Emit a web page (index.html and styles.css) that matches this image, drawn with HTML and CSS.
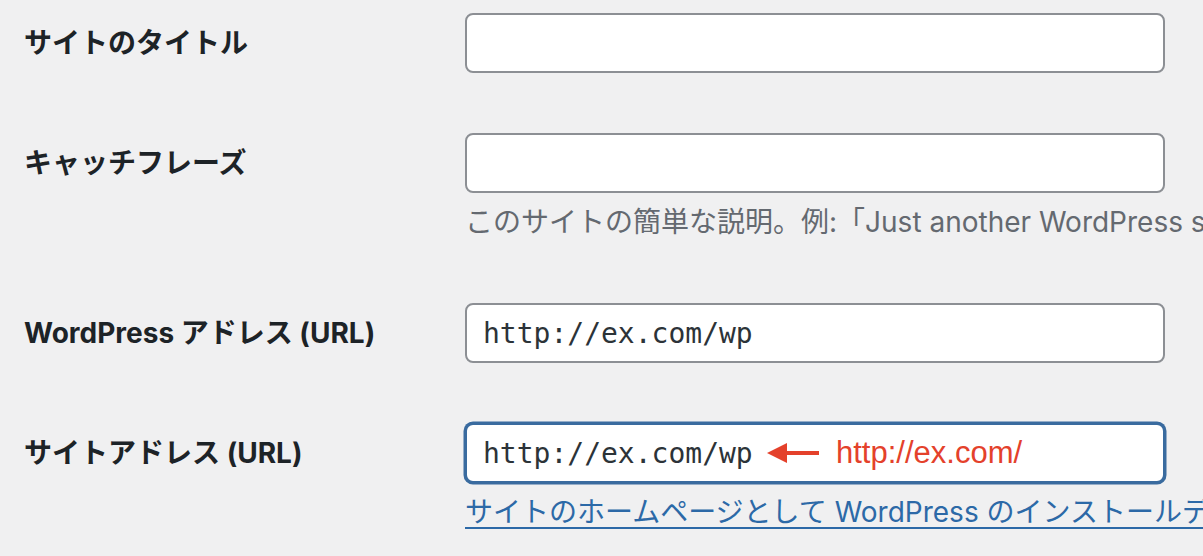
FILE: index.html
```html
<!DOCTYPE html>
<html lang="ja">
<head>
    <meta charset="UTF-8">
    <meta name="viewport" content="width=device-width, initial-scale=1.0">
    <title>一般設定</title>
    <link rel="stylesheet" href="styles.css">
</head>
<body>

    <div class="form-table">
        <div class="row">
            <label for="blogname">サイトのタイトル</label>
            <div class="field">
                <input type="text" id="blogname" class="regular-text">
            </div>
        </div>

        <div class="row">
            <label for="blogdescription">キャッチフレーズ</label>
            <div class="field">
                <input type="text" id="blogdescription" class="regular-text">
                <p class="description">このサイトの簡単な説明。例:「Just another WordPress site」</p>
            </div>
        </div>

        <div class="row">
            <label for="siteurl">WordPress アドレス (URL)</label>
            <div class="field">
                <input type="url" id="siteurl" class="regular-text code" value="http://ex.com/wp">
            </div>
        </div>

        <div class="row">
            <label for="home">サイトアドレス (URL)</label>
            <div class="field">
                <div class="input-wrap">
                    <input type="url" id="home" class="regular-text code is-focus" value="http://ex.com/wp">
                    <!-- annotation drawn over the field -->
                    <div class="note">
                        <svg width="52" height="22" viewBox="0 0 52 22">
                            <polygon points="0,11 20,1 20,21" fill="#e4412b"/>
                            <rect x="18" y="9" width="34" height="4" fill="#e4412b"/>
                        </svg>
                        <span>http://ex.com/</span>
                    </div>
                </div>
                <p class="description"><a href="#">サイトのホームページとして WordPress のインストールディレクトリとは異なる場所を設定する場合は、ここにアドレスを入力してください。</a></p>
            </div>
        </div>
    </div>

</body>
</html>
```

FILE: styles.css
```css
/* Basic Reset */
* {
    margin: 0;
    padding: 0;
    box-sizing: border-box;
}

body {
    font-family: Inter, "Noto Sans CJK JP", sans-serif;
    background-color: #f0f0f1;
    color: #1d2327;
    height: 100vh;
    overflow: hidden;
    padding-left: 24px;
}

/* Settings rows */
.row {
    display: grid;
    grid-template-columns: 441px 1fr;
    padding: 30px 0;
}

.row:first-child {
    padding-top: 13px;
}

label {
    font-size: 28px;
    font-weight: bold;
    line-height: 60px;
    white-space: nowrap;
}

.field {
    min-width: 0;
}

input {
    display: block;
    width: 700px;
    height: 60px;
    padding: 0 16px;
    border: 2px solid #8c8f94;
    border-radius: 8px;
    background-color: #fff;
    font-size: 28px;
    color: #2c3338;
    outline: none;
}

.code {
    font-family: "DejaVu Sans Mono", monospace;
}

.is-focus {
    border-color: #3a6b9f;
    box-shadow: 0 0 0 1.5px #3a6b9f;
}

.description {
    margin-top: 8px;
    font-size: 28px;
    line-height: 42px;
    color: #646970;
    white-space: nowrap;
}

.description a {
    color: #2c69a7;
    text-decoration: underline;
    text-underline-offset: 5px;
}

/* Red annotation */
.input-wrap {
    position: relative;
}

.note {
    position: absolute;
    left: 302px;
    top: 0;
    height: 60px;
    display: flex;
    align-items: center;
    gap: 17px;
    color: #e4412b;
    font-family: "Liberation Sans", Arial, sans-serif;
    font-size: 31px;
}
```
